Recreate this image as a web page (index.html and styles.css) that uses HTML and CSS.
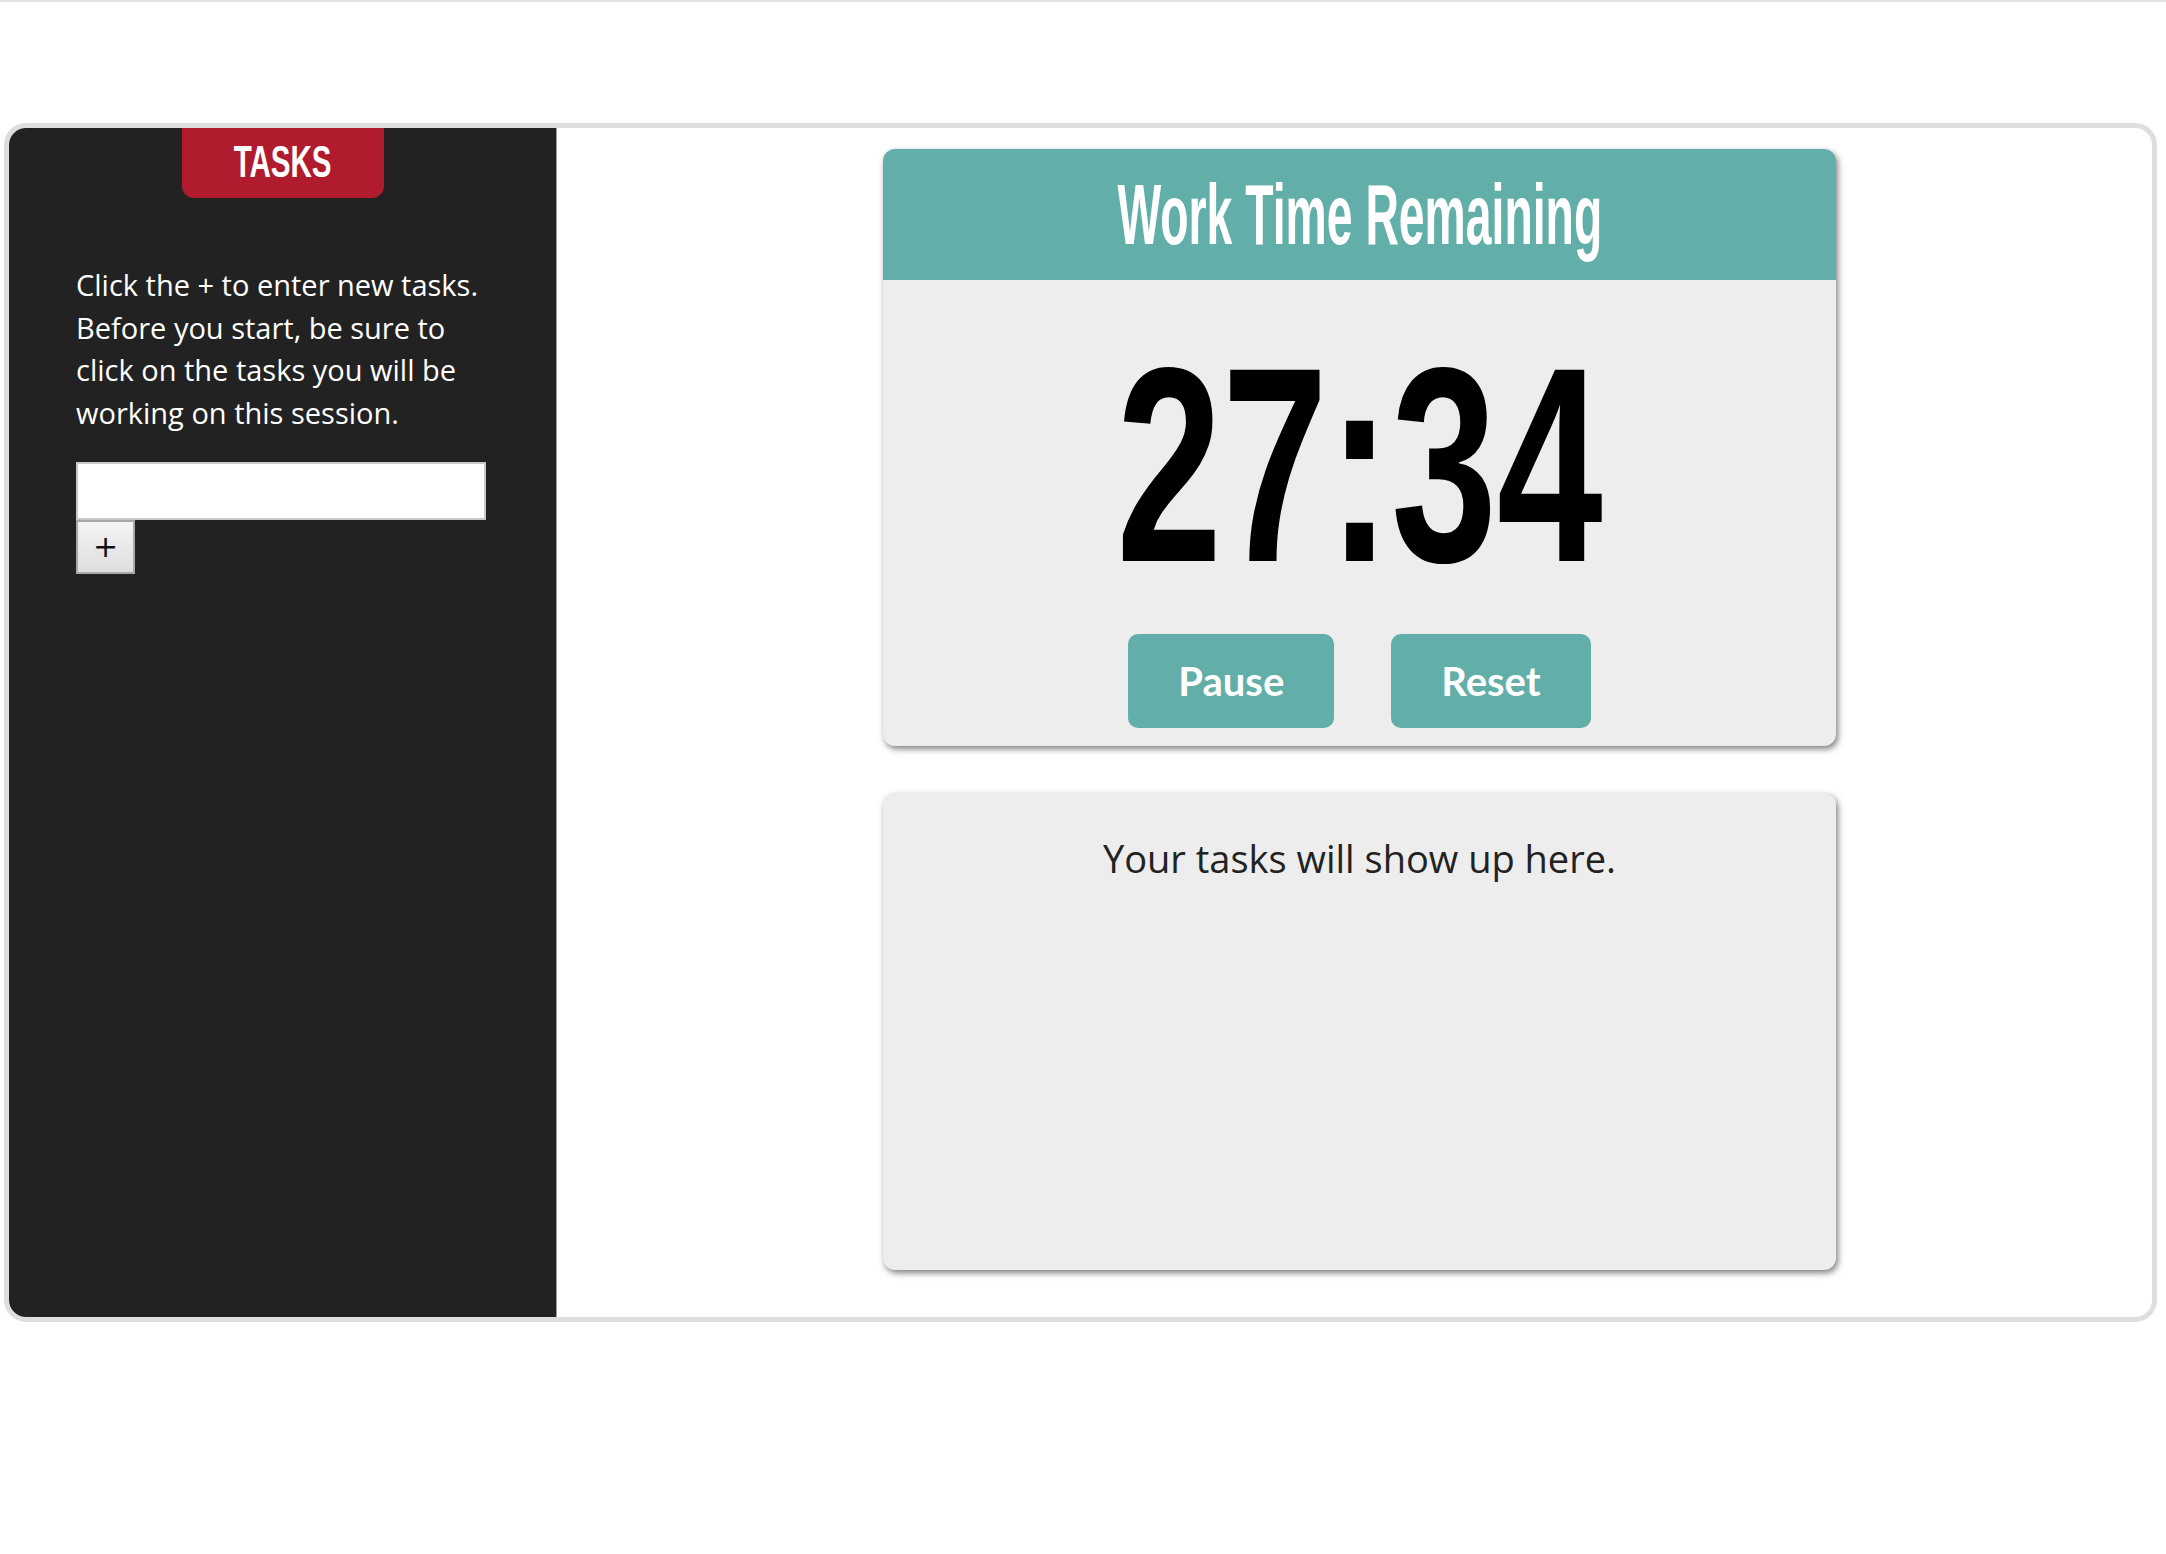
FILE: index.html
```html
<!DOCTYPE html>
<html lang="en">
<head>
<meta charset="utf-8">
<title>Pomodoro Tasks</title>
<link rel="stylesheet" href="styles.css">
</head>
<body>
<div class="topline"></div>
<div class="app">
  <aside class="sidebar">
    <div class="tab"><span class="tab-label">TASKS</span></div>
    <p class="help">Click the + to enter new tasks. Before you start, be sure to click on the tasks you will be working on this session.</p>
    <div class="entry">
      <input class="task-input" type="text">
      <button class="add-btn">+</button>
    </div>
  </aside>
  <main class="main">
    <section class="card timer-card">
      <header class="timer-head"><h1 class="timer-title">Work Time Remaining</h1></header>
      <div class="timer-body">
        <div class="clock"><span class="clock-digits">27:34</span></div>
        <div class="controls">
          <button class="ctl">Pause</button>
          <button class="ctl">Reset</button>
        </div>
      </div>
    </section>
    <section class="card task-card">
      <p class="placeholder">Your tasks will show up here.</p>
    </section>
  </main>
</div>
</body>
</html>
```

FILE: styles.css
```css
html, body {
  margin: 0;
  padding: 0;
  background: #fff;
}
body {
  font-family: "Open Sans", Lato, sans-serif;
  width: 2166px;
  height: 1554px;
}
.topline {
  height: 2px;
  background: #e2e2e2;
}
.app {
  display: flex;
  margin: 121px 0 0 4px;
  width: 2153px;
  height: 1199px;
  box-sizing: border-box;
  border: 5px solid #dedede;
  border-radius: 22px;
  overflow: hidden;
}
.sidebar {
  width: 548px;
  flex: none;
  box-sizing: border-box;
  background: #222;
  border-right: 1px solid #9a9a9a;
  display: flex;
  flex-direction: column;
  align-items: flex-start;
  padding-left: 67px;
}
.tab {
  align-self: center;
  margin-left: -67px;
  width: 202px;
  height: 70px;
  background: #b11b2e;
  border-radius: 0 0 12px 12px;
  display: flex;
  align-items: center;
  justify-content: center;
}
.tab-label {
  display: inline-block;
  color: #fff;
  font-family: "Liberation Sans", Arial, sans-serif;
  font-weight: bold;
  font-size: 45px;
  line-height: 1;
  transform: scaleX(0.656);
  margin-top: -4px;
}
.help {
  margin: 66px 0 0 0;
  width: 410px;
  color: #fff;
  font-size: 29px;
  line-height: 42.5px;
}
.entry {
  margin-top: 28px;
  display: flex;
  flex-direction: column;
  align-items: flex-start;
}
.task-input {
  width: 410px;
  height: 58px;
  box-sizing: border-box;
  border: 2px solid #c8c8c8;
  background: #fff;
  margin: 0;
  padding: 0 8px;
}
.add-btn {
  width: 59px;
  height: 54px;
  box-sizing: border-box;
  margin: 0;
  border: 2px solid #a8a8a8;
  background: linear-gradient(#f4f4f4, #dedede);
  font-family: "DejaVu Sans", sans-serif;
  font-size: 30px;
  line-height: 1;
  color: #111;
  padding: 0;
}
.main {
  flex: 1;
  display: flex;
  flex-direction: column;
  align-items: center;
  margin-left: 10px;
}
.card {
  width: 953px;
  background: #ededed;
  border-radius: 12px;
  box-shadow: 2px 3px 6px rgba(0, 0, 0, 0.5);
  overflow: hidden;
}
.timer-card {
  margin-top: 21px;
  padding-bottom: 18px;
}
.timer-head {
  height: 131px;
  background: #62aea9;
  display: flex;
  align-items: center;
  justify-content: center;
}
.timer-title {
  margin: 0;
  display: inline-block;
  color: #fff;
  font-family: "Liberation Sans", Arial, sans-serif;
  font-weight: bold;
  font-size: 85px;
  line-height: 95px;
  transform: scaleX(0.545);
  white-space: nowrap;
}
.timer-body {
  display: flex;
  flex-direction: column;
  align-items: center;
}
.clock {
  margin-top: 46px;
  height: 278px;
  line-height: 1;
}
.clock-digits {
  display: inline-block;
  font-family: "Liberation Sans", Arial, sans-serif;
  font-weight: bold;
  font-size: 278px;
  line-height: 1;
  color: #000;
  transform: scaleX(0.684);
}
.controls {
  margin-top: 30px;
  display: flex;
  gap: 57px;
}
.ctl {
  height: 94px;
  padding: 0 50px;
  border: none;
  border-radius: 10px;
  background: #62aea9;
  color: #fff;
  font-family: Lato, sans-serif;
  font-weight: bold;
  font-size: 40px;
}
.task-card {
  margin-top: 47px;
  height: 477px;
  box-sizing: border-box;
  padding-top: 41px;
}
.placeholder {
  margin: 0;
  text-align: center;
  color: #222;
  font-size: 38px;
  line-height: 48px;
}
```
